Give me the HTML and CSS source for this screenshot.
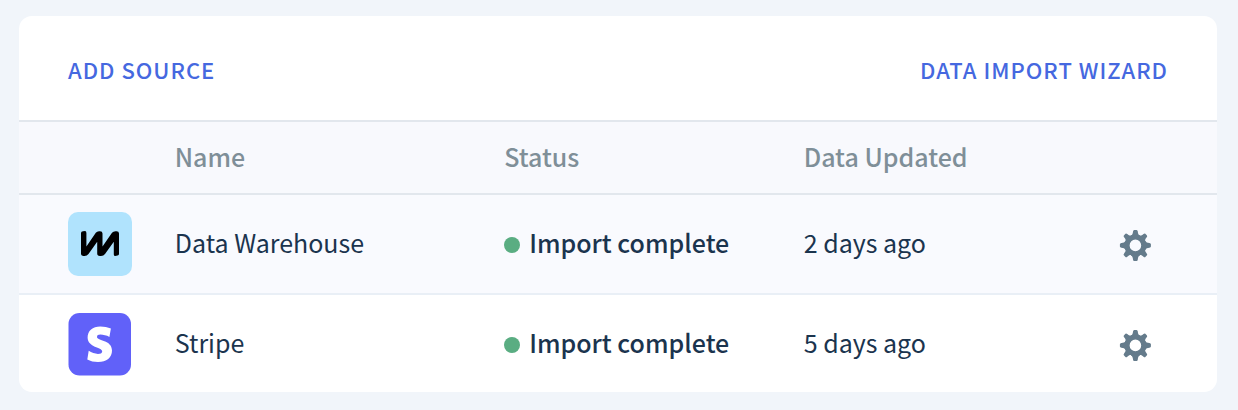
FILE: index.html
```html
<!DOCTYPE html>
<html lang="en">
<head>
    <meta charset="UTF-8">
    <meta name="viewport" content="width=device-width, initial-scale=1.0">
    <title>Data Sources</title>
    <link rel="stylesheet" href="styles.css">
</head>
<body>
    <svg class="sprite" aria-hidden="true">
        <symbol id="gear" viewBox="-16 -16 32 32">
            <defs>
                <path id="tooth" d="M-4.5 -8 L-4.4 -10 C-3 -10.6 -2.6 -12 -2.4 -14 Q-2.2 -15.5 -1.2 -15.5 H1.2 Q2.2 -15.5 2.4 -14 C2.6 -12 3 -10.6 4.4 -10 L4.5 -8 Z"/>
            </defs>
            <g fill="currentColor" transform="translate(0.4 0.4)">
                <circle r="8.3" fill="none" stroke="currentColor" stroke-width="5"/>
                <use href="#tooth"/>
                <use href="#tooth" transform="rotate(45) scale(0.95 0.98)"/>
                <use href="#tooth" transform="rotate(90)"/>
                <use href="#tooth" transform="rotate(135) scale(0.95 0.98)"/>
                <use href="#tooth" transform="rotate(180)"/>
                <use href="#tooth" transform="rotate(225) scale(0.95 0.98)"/>
                <use href="#tooth" transform="rotate(270)"/>
                <use href="#tooth" transform="rotate(315) scale(0.95 0.98)"/>
            </g>
        </symbol>
    </svg>

    <main class="card">
        <div class="toolbar">
            <button class="link-button" type="button">ADD SOURCE</button>
            <button class="link-button" type="button">DATA IMPORT WIZARD</button>
        </div>

        <table class="sources">
            <colgroup>
                <col class="col-logo">
                <col class="col-name">
                <col class="col-status">
                <col>
                <col class="col-action">
            </colgroup>
            <thead>
                <tr>
                    <td></td>
                    <th scope="col">Name</th>
                    <th scope="col">Status</th>
                    <th scope="col">Data Updated</th>
                    <td></td>
                </tr>
            </thead>
            <tbody>
                <tr class="shaded">
                    <td class="logo-cell">
                        <svg class="logo" viewBox="0 0 64 64" aria-hidden="true">
                            <rect width="64" height="64" rx="10" fill="#b0e3fd"/>
                            <path d="M13 21 Q13 19.5 15 19.3 L17 19 Q18.4 19 18.4 21 V34.5 L27.8 20.8 Q29 19.2 31 19.2 H32 Q34.5 19.2 34.5 21.5 V34.5 L44 20.8 Q45.2 19.2 47.5 19.2 H48.5 Q51 19.2 51 21.5 V42 Q51 43.2 49.5 43.6 L47.3 44 Q45.8 44 45.8 42.5 V29.8 L37 42 Q35.6 44 33 44 H31.8 Q29.2 44 29.2 41.5 V29.8 L20.5 42 Q19 44 16.5 44 H15.5 Q13 44 13 41.5 Z" fill="#000"/>
                        </svg>
                    </td>
                    <td>Data Warehouse</td>
                    <td><span class="status">Import complete</span></td>
                    <td>2 days ago</td>
                    <td class="action-cell">
                        <button class="icon-button" type="button" aria-label="Data Warehouse settings">
                            <svg class="gear"><use href="#gear"/></svg>
                        </button>
                    </td>
                </tr>
                <tr>
                    <td class="logo-cell">
                        <svg class="logo" viewBox="0 0 64 64" aria-hidden="true">
                            <rect x="0.5" y="1" width="62.5" height="62.5" rx="11" fill="#6161f9"/>
                            <path d="M29 25 C29 23.4 30.3 22.6 32.3 22.6 C35.3 22.6 38.6 23.5 41.4 24.9 L42.9 16.6 C39.7 15.2 36.1 14.5 32.3 14.5 C24.6 14.5 19.6 18.7 19.6 25.6 C19.6 35.8 34.2 35.2 34.2 39.4 C34.2 41.1 32.4 41.9 30 41.9 C27 41.9 23.5 40.5 20.7 38.8 L19.3 47.5 C22.4 49.2 26 50 30 50 C38.6 50 44 45.8 44 38.6 C44 27.6 29 29 29 25 Z" fill="#fff"/>
                        </svg>
                    </td>
                    <td>Stripe</td>
                    <td><span class="status">Import complete</span></td>
                    <td>5 days ago</td>
                    <td class="action-cell">
                        <button class="icon-button" type="button" aria-label="Stripe settings">
                            <svg class="gear"><use href="#gear"/></svg>
                        </button>
                    </td>
                </tr>
            </tbody>
        </table>
    </main>
</body>
</html>
```
FILE: styles.css
```css
* {
    margin: 0;
    padding: 0;
    box-sizing: border-box;
}

body {
    font-family: "Noto Sans CJK JP", "Noto Sans", sans-serif;
    font-size: 25px;
    line-height: 32px;
    background: #f1f5fa;
    color: #1b344e;
    padding: 16px 21px 18px 19px;
}

.sprite {
    position: absolute;
    width: 0;
    height: 0;
}

.card {
    background: #fff;
    border-radius: 13px;
    overflow: hidden;
}

.toolbar {
    display: flex;
    justify-content: space-between;
    padding: 37px 49px 35px;
}

button {
    background: none;
    border: none;
    color: inherit;
    font-family: inherit;
    cursor: pointer;
}

.link-button {
    color: #4568e0;
    font-size: 22px;
    font-weight: 500;
    line-height: 32px;
    letter-spacing: 1px;
}

.sources {
    width: 100%;
    table-layout: fixed;
    border-collapse: separate;
    border-spacing: 0;
}

.col-logo {
    width: 13%;
}

.col-name {
    width: 27.5%;
}

.col-status {
    width: 25%;
}

.col-action {
    width: 114px;
}

.sources th,
.sources td {
    padding-bottom: 4px;
    text-align: left;
    vertical-align: middle;
}

.sources .logo-cell {
    padding: 0 0 0 49px;
}

.sources .action-cell {
    padding: 2px 0 0;
}

.sources thead th,
.sources thead td {
    height: 75px;
    background: #f8f9fd;
    border-top: 2px solid #e2e7ed;
    border-bottom: 2px solid #e2e7ed;
    color: #7f8f98;
    font-weight: 500;
}

.sources tbody td {
    height: 97px;
}

.sources .shaded td {
    height: 100px;
    background: #f9fafe;
    border-bottom: 2px solid #e9eff6;
}

.logo {
    display: block;
    width: 64px;
    height: 64px;
}

.status {
    font-weight: 500;
}

.status::before {
    content: "";
    display: inline-block;
    width: 16px;
    height: 16px;
    margin-right: 9px;
    border-radius: 50%;
    background: #5aad82;
}

.icon-button {
    display: block;
    padding: 16px;
    color: #647b8b;
}

.gear {
    display: block;
    width: 32px;
    height: 32px;
}
```
